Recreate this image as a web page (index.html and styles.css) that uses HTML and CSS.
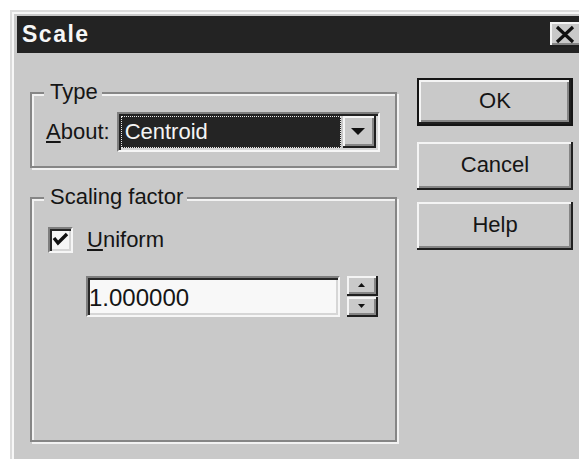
FILE: index.html
```html
<!DOCTYPE html>
<html lang="en">
<head>
<meta charset="utf-8">
<title>Scale</title>
<link rel="stylesheet" href="styles.css">
</head>
<body>
<div class="dialog">
  <div class="titlebar">
    <span class="title">Scale</span>
    <div class="close" role="button" aria-label="Close">
      <svg width="30" height="21" viewBox="0 0 30 21"><path d="M5 3 L21 18 M21 3 L5 18" stroke="#111" stroke-width="3.2" fill="none"/></svg>
    </div>
  </div>
  <div class="content">
    <div class="left">
      <div class="group type-group">
        <div class="legend">Type</div>
        <div class="about-row">
          <span class="label"><span class="u">A</span>bout:</span>
          <div class="combo">
            <div class="field">Centroid</div>
            <div class="bevel dropbtn">
              <svg width="14" height="7" viewBox="0 0 14 7"><path d="M0 0 H14 L7 7 Z" fill="#111"/></svg>
            </div>
          </div>
        </div>
      </div>
      <div class="group scale-group">
        <div class="legend">Scaling factor</div>
        <div class="check-row">
          <span class="checkbox">
            <svg width="21" height="22" viewBox="0 0 21 22"><path d="M4 9 L8 14 L17 5" stroke="#111" stroke-width="3.4" fill="none"/></svg>
          </span>
          <span class="label"><span class="u">U</span>niform</span>
        </div>
        <div class="edit-row">
          <div class="edit">1.000000</div>
          <div class="spin">
            <div class="bevel spinbtn"><svg width="7" height="4" viewBox="0 0 7 4"><path d="M0 4 H7 L3.5 0 Z" fill="#111"/></svg></div>
            <div class="bevel spinbtn"><svg width="7" height="4" viewBox="0 0 7 4"><path d="M0 0 H7 L3.5 4 Z" fill="#111"/></svg></div>
          </div>
        </div>
      </div>
    </div>
    <div class="buttons">
      <div class="btn default">OK</div>
      <div class="btn cancel">Cancel</div>
      <div class="btn help">Help</div>
    </div>
  </div>
</div>
</body>
</html>
```
FILE: styles.css
```css
* {
  box-sizing: border-box;
}

html, body {
  margin: 0;
  height: 100%;
  overflow: hidden;
  background: #ffffff;
}

body {
  font-family: "Liberation Sans", Arial, sans-serif;
  font-size: 22px;
  line-height: 24px;
  color: #151515;
}

/* window frame */
.dialog {
  margin: 10px 0 0 10px;
  width: 590px;
  height: 470px;
  background: #c9c9c9;
  border: 2px solid;
  border-color: #dcdcdc #2a2a2a #2a2a2a #dcdcdc;
  box-shadow: inset 2px 2px 0 #f7f7f7;
  padding: 4px 0 0 5px;
}

.titlebar {
  height: 37px;
  background: #232323;
  display: flex;
  align-items: center;
  padding-left: 5px;
}

.title {
  flex: 1;
  color: #f6f6f6;
  font-weight: bold;
  font-size: 23px;
  letter-spacing: 1.5px;
  line-height: 37px;
}

/* raised 3D edge used by every push button */
.bevel, .close, .btn {
  background: #c9c9c9;
  box-shadow:
    inset -2px -2px 0 #1f1f1f,
    inset 2px 2px 0 #f4f4f4,
    inset -4px -4px 0 #858585;
}

.close {
  flex: 0 0 44px;
  height: 25px;
  margin-right: 4px;
  display: flex;
  align-items: center;
  padding: 0 0 0 2px;
}

.content {
  display: flex;
  gap: 20px;
  padding: 25px 0 0 13px;
}

.left {
  width: 367px;
  display: flex;
  flex-direction: column;
}

/* etched group frame */
.group {
  border: 2px solid #868686;
  box-shadow: inset 2px 2px 0 #f2f2f2, 2px 2px 0 #f2f2f2;
}

.legend {
  width: fit-content;
  margin: -14px 0 0 12px;
  padding: 0 4px 0 6px;
  background: #c9c9c9;
  line-height: 24px;
}

.u {
  text-decoration: underline;
  text-decoration-thickness: 2px;
  text-underline-offset: 2px;
}

.type-group {
  margin-top: 14px;
  height: 76px;
}

.about-row {
  display: flex;
  align-items: center;
  gap: 7px;
  margin: 8px 0 0 14px;
}

/* sunken combo box */
.combo {
  width: 263px;
  height: 40px;
  display: flex;
  gap: 2px;
  border: 2px solid;
  border-color: #7e7e7e #f6f6f6 #f6f6f6 #7e7e7e;
  box-shadow: inset 2px 2px 0 #222, inset -2px -2px 0 #d6d6d6;
  padding: 2px;
}

.field {
  flex: 1;
  background: #242424;
  color: #f4f4f4;
  border: 1px dotted #e6e6e6;
  padding-left: 3px;
  display: flex;
  align-items: center;
}

.dropbtn {
  width: 33px;
  display: flex;
  align-items: center;
  justify-content: center;
  padding: 0 2px 2px 0;
}

.scale-group {
  margin-top: 29px;
  height: 245px;
}

.check-row {
  display: flex;
  align-items: center;
  gap: 14px;
  margin: 18px 0 0 16px;
}

.checkbox {
  width: 25px;
  height: 26px;
  background: #f6f6f6;
  border: 2px solid;
  border-color: #7e7e7e #f6f6f6 #f6f6f6 #7e7e7e;
  box-shadow: inset 2px 2px 0 #262626, inset -2px -2px 0 #d6d6d6;
  display: flex;
  align-items: center;
  justify-content: center;
}

.edit-row {
  display: flex;
  gap: 7px;
  margin: 23px 0 0 54px;
}

.edit {
  width: 254px;
  height: 41px;
  background: #f8f8f8;
  border: 2px solid;
  border-color: #7e7e7e #f6f6f6 #f6f6f6 #7e7e7e;
  box-shadow: inset 2px 2px 0 #262626, inset -2px -2px 0 #d6d6d6;
  font-size: 24px;
  display: flex;
  align-items: center;
  padding: 2px 0 0 1px;
}

.spin {
  width: 31px;
  display: flex;
  flex-direction: column;
  gap: 1px;
}

.spinbtn {
  height: 20px;
  display: flex;
  align-items: center;
  justify-content: center;
  padding: 0 2px 2px 0;
}

.buttons {
  display: flex;
  flex-direction: column;
  width: 156px;
}

.btn {
  height: 48px;
  display: flex;
  align-items: center;
  justify-content: center;
  padding-bottom: 3px;
}

.btn.default {
  border: 2px solid #151515;
}

.btn.cancel {
  margin-top: 16px;
}

.btn.help {
  margin-top: 12px;
}
```
